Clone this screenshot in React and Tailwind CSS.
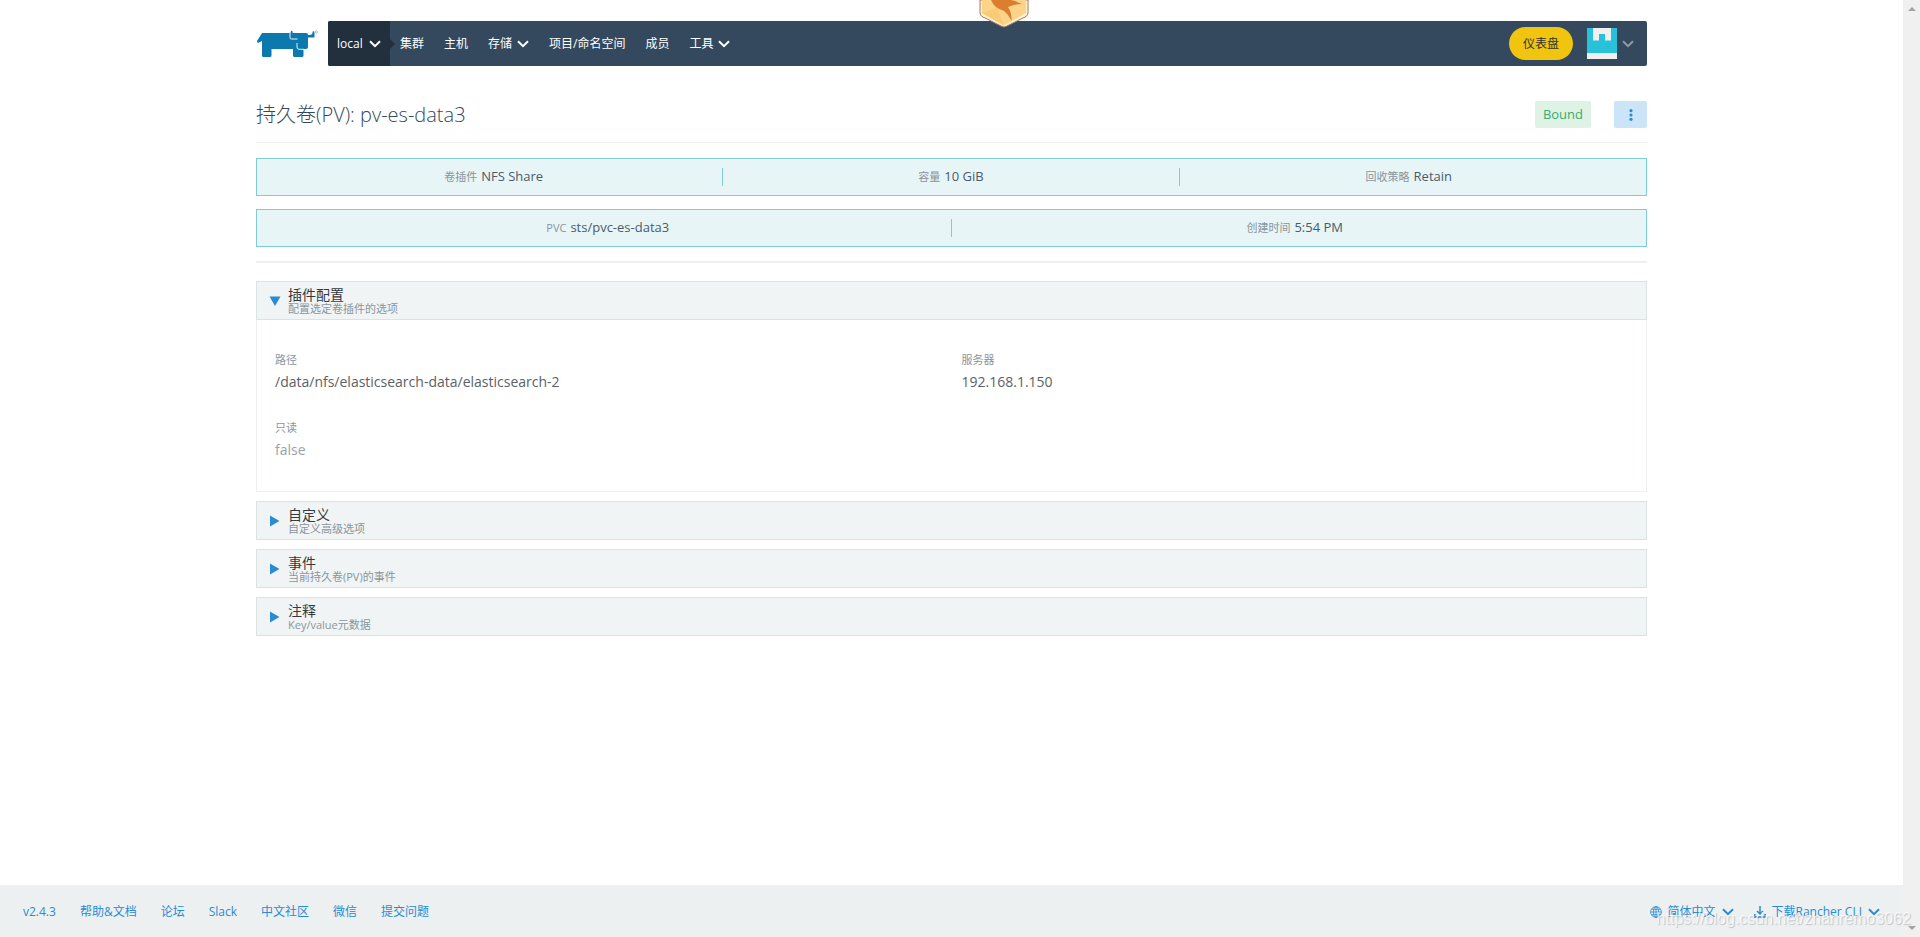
import React, { useState } from 'react';
import clsx from 'clsx';

const NAV_ITEMS = [
    { label: '集群' },
    { label: '主机' },
    { label: '存储', menu: true },
    { label: '项目/命名空间' },
    { label: '成员' },
    { label: '工具', menu: true },
];

const SUMMARY = [
    { label: '卷插件', value: 'NFS Share' },
    { label: '容量', value: '10 GiB' },
    { label: '回收策略', value: 'Retain' },
];

const DETAILS = [
    { label: 'PVC', value: 'sts/pvc-es-data3' },
    { label: '创建时间', value: '5:54 PM' },
];

const PLUGIN_FIELDS = [
    { label: '路径', value: '/data/nfs/elasticsearch-data/elasticsearch-2' },
    { label: '服务器', value: '192.168.1.150' },
    { label: '只读', value: 'false', muted: true },
];

const FOOTER_LINKS = ['v2.4.3', '帮助&文档', '论坛', 'Slack', '中文社区', '微信', '提交问题'];

const Chevron = ({ className }) => (
    <svg viewBox="0 0 12 8" className={clsx('h-2 w-3 shrink-0', className)} fill="none" stroke="currentColor" strokeWidth="2" aria-hidden="true">
        <path d="M1 1.2 L6 6.2 L11 1.2" />
    </svg>
);

const Logo = () => (
    <svg viewBox="0 0 62 28" className="h-7 w-[62px]" aria-hidden="true">
        <path
            d="M6 3H34.500L35 1Q36.500 0.300 36.600 2V3H50Q52 3 52 5H54Q57 4.500 56.500 1.500Q58.500 0.500 58.500 3.500V7.500H52V17Q52 19 50 19H47.500V25.500Q47.500 27 46 27H38.500Q37 27 37 25.500V19H15.500V25.500Q15.500 27 14 27H7.500Q6 27 6 25.500V11L3 12.500Q0.800 13.200 1 11Z"
            fill="#0b78ae"
        />
        <path d="M34 3V7.700Q34 9 35.500 9H41.500M41 13V17Q41 19.300 43 19.300H48" fill="none" stroke="#fff" strokeWidth="0.900" />
        <circle cx="60.200" cy="2" r="1.200" fill="none" stroke="#7fb6d2" strokeWidth="0.800" />
    </svg>
);

const Badge = () => (
    <svg viewBox="0 0 50 28" className="h-7 w-[50px]" aria-hidden="true">
        <path d="M1 0H49V13Q49 15 47 16.500L28 26Q25 28 22 26L3 16.500Q1 15 1 13Z" fill="#fdf1d2" stroke="#a8765a" />
        <path d="M3 0H47V13L25 25.500L3 13Z" fill="#fbd48a" />
        <path d="M3 13L18 8L25 25.500Z" fill="#f9cb74" />
        <path d="M12 0Q15 8 25 11Q29 14 32.500 21Q33 13 29 7Q36 4 43 4Q37 1 32 0Z" fill="#d97f2f" />
    </svg>
);

const Navbar = () => (
    <header className="flex">
        <a href="#home" aria-label="Rancher" className="flex w-[72px] shrink-0 items-center">
            <Logo />
        </a>
        <nav className="flex h-[45px] flex-1 rounded-xs bg-[#34495e] text-xs text-white">
            <button className="relative flex w-[62px] items-center gap-[6px] rounded-l-xs bg-[#22303d] pl-[9px]">
                <span>local</span>
                <Chevron />
                <span className="absolute left-full border-y-[5px] border-l-[5px] border-y-transparent border-l-[#22303d]" />
            </button>
            {NAV_ITEMS.map((item) => (
                <a key={item.label} href="#nav" className="flex items-center gap-[5px] px-[10px]">
                    {item.label}
                    {item.menu && <Chevron />}
                </a>
            ))}
            <div className="ml-auto flex items-center pr-[13px]">
                <button className="h-[33px] rounded-full bg-[#f1c40f] px-[14px] text-[#34302c]">仪表盘</button>
                <button className="ml-[14px] flex items-center gap-[5px] text-[#8f9ba6]" aria-label="User menu">
                    <svg viewBox="0 0 30 31" className="h-[31px] w-[30px]" aria-hidden="true">
                        <path d="M0 0H30V31H0Z" fill="#f0f0f0" />
                        <path d="M0 0H6V12.500H12V6H18V12.500H24V0H30V25H0Z" fill="#27c1da" />
                    </svg>
                    <Chevron />
                </button>
            </div>
        </nav>
    </header>
);

const Banner = ({ items, className }) => (
    <dl className={clsx('grid h-[38px] items-center border border-[#7fcdd3] bg-[#e8f5f7]', className)}>
        {items.map((item) => (
            <div key={item.label} className="flex h-[18px] items-center justify-center gap-1 border-r border-[#7fcdd3] first:pl-2 last:border-r-0 last:pr-2">
                <dt className="text-[11px] text-[#8a949c]">{item.label}</dt>
                <dd className="text-[13px] text-[#4a5b6c]">{item.value}</dd>
            </div>
        ))}
    </dl>
);

const Accordion = ({ title, detail, defaultOpen = false, children }) => {
    const [open, setOpen] = useState(defaultOpen);

    return (
        <section>
            <button
                onClick={() => setOpen(!open)}
                aria-expanded={open}
                className="flex h-[39px] w-full items-center border border-[#dae2e3] bg-[#f0f4f5] pl-3 text-left"
            >
                <svg viewBox="0 0 12 12" className="h-3 w-3" fill="#2a8bd2" aria-hidden="true">
                    <path d={open ? 'M0.500 1.500H11.500L6 11Z' : 'M1 0.500V11.500L10.500 6Z'} />
                </svg>
                <span className="ml-[7px] block">
                    <span className="block text-sm leading-4 text-[#333a3f]">{title}</span>
                    <span className="block text-[11px] leading-3 text-[#8a949c]">{detail}</span>
                </span>
            </button>
            {open && children}
        </section>
    );
};

const App = () => (
    <div className="relative flex min-h-screen bg-white font-['Open_Sans','Noto_Sans_CJK_SC',sans-serif] text-[#5a6167]">
        <div className="relative flex flex-1 flex-col">
            <div className="mx-auto w-full max-w-[1439px] px-6 pt-[21px]">
                <Navbar />

                <main>
                    <div className="mt-[35px] flex items-center border-b border-[#ecf0f1] pb-[14px]">
                        <h1 className="text-xl leading-[27px] font-light text-[#34495e]">持久卷(PV): pv-es-data3</h1>
                        <span className="ml-auto rounded-xs bg-[#dff2e6] px-2 text-[13px] leading-[27px] text-[#3cab6b]">Bound</span>
                        <button className="ml-[23px] flex h-[27px] w-[33px] items-center justify-center rounded-xs bg-[#cce4f7]" aria-label="Actions">
                            <svg viewBox="0 0 4 12" className="h-3 w-1" fill="#2a8bd2" aria-hidden="true">
                                <circle cx="2" cy="1.700" r="1.600" />
                                <circle cx="2" cy="6" r="1.600" />
                                <circle cx="2" cy="10.300" r="1.600" />
                            </svg>
                        </button>
                    </div>

                    <div className="mt-[15px] space-y-[13px] border-b-2 border-[#ecf0f1] pb-[14px]">
                        <Banner items={SUMMARY} className="grid-cols-[467fr_457fr_467fr]" />
                        <Banner items={DETAILS} className="grid-cols-2" />
                    </div>

                    <div className="mt-[18px] space-y-[9px]">
                        <Accordion title="插件配置" detail="配置选定卷插件的选项" defaultOpen>
                            <dl className="grid grid-cols-2 gap-x-5 gap-y-6 border border-t-0 border-[#ecf0f1] px-[18px] pt-[29px] pb-[30px]">
                                {PLUGIN_FIELDS.map((field) => (
                                    <div key={field.label}>
                                        <dt className="text-[11px] leading-[22px] text-[#8a949c]">{field.label}</dt>
                                        <dd className={clsx('text-sm leading-[22px]', field.muted && 'text-[#9aa2a9]')}>{field.value}</dd>
                                    </div>
                                ))}
                            </dl>
                        </Accordion>
                        <Accordion title="自定义" detail="自定义高级选项" />
                        <Accordion title="事件" detail="当前持久卷(PV)的事件" />
                        <Accordion title="注释" detail="Key/value元数据" />
                    </div>
                </main>
            </div>

            <footer className="mt-auto flex h-[52px] items-center justify-between bg-[#ecf0f1] px-[23px] pt-[2px] text-xs text-[#2a8bd2]">
                <div className="flex gap-6">
                    {FOOTER_LINKS.map((link) => (
                        <a key={link} href="#footer">{link}</a>
                    ))}
                </div>
                <div className="flex gap-5">
                    <button className="flex items-center gap-[6px]">
                        <svg viewBox="0 0 12 12" className="h-3 w-3" fill="none" stroke="currentColor" strokeWidth="0.800" aria-hidden="true">
                            <circle cx="6" cy="6" r="5.400" />
                            <ellipse cx="6" cy="6" rx="2.600" ry="5.400" />
                            <path d="M6 0.700V11.300M0.700 6H11.300M1.500 3.300H10.500M1.500 8.700H10.500" />
                        </svg>
                        简体中文
                        <Chevron />
                    </button>
                    <button className="flex items-center gap-[6px]">
                        <svg viewBox="0 0 12 12" className="h-3 w-3" fill="none" stroke="currentColor" strokeWidth="1.500" aria-hidden="true">
                            <path d="M6 0V8M3 5L6 8L9 5M0.800 8V11H11.200V8" />
                        </svg>
                        下载Rancher CLI
                        <Chevron />
                    </button>
                </div>
            </footer>

            <div className="absolute top-0 left-[979px]">
                <Badge />
            </div>
        </div>

        <div className="flex w-[17px] flex-col items-center justify-between bg-[#f0f0f0] pt-[7px] pb-[7px]" aria-hidden="true">
            <span className="border-x-4 border-b-4 border-x-transparent border-b-[#a3a3a3]" />
            <span className="border-x-4 border-t-4 border-x-transparent border-t-[#a3a3a3]" />
        </div>

        <div className="pointer-events-none absolute right-[9px] bottom-2 font-['Liberation_Sans',sans-serif] text-base leading-5 text-white/70 [text-shadow:1px_1px_1px_rgba(0,0,0,0.18)]">
            https://blog.csdn.net/zhanremo3062
        </div>
    </div>
);

export default App;
